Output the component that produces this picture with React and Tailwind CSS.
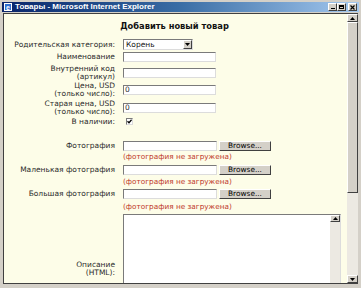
import React from "react";

const lbl = "w-[112px] shrink-0 pr-[1px] text-right leading-[7.5px] whitespace-nowrap";
const inputCls =
  "h-[10px] bg-white border border-t-[#7a7a7a] border-l-[#7a7a7a] border-b-[#dcdcdc] border-r-[#dcdcdc]";

function Btn3d({ children, className = "" }) {
  return (
    <div
      className={
        "bg-[#d4d0c8] border border-t-[#ffffff] border-l-[#ffffff] border-b-[#404040] border-r-[#404040] flex items-center justify-center " +
        className
      }
    >
      {children}
    </div>
  );
}

function Row({ label, children, className = "" }) {
  return (
    <div className={"flex items-center " + className}>
      <div className={lbl}>{label}</div>
      <div className="ml-[7px] flex items-center">{children}</div>
    </div>
  );
}

function Red({ className = "" }) {
  return (
    <div className={"flex " + className}>
      <div className="w-[112px] shrink-0" />
      <div className="ml-[7px] text-[#c0392b] leading-[8px] text-[7.3px]">(фотография не загружена)</div>
    </div>
  );
}

function FileRow({ label, className }) {
  return (
    <Row label={label} className={className}>
      <div className={inputCls + " w-[94px]"} />
      <Btn3d className="ml-[2px] w-[52px] h-[10px] text-[7.4px] text-black">Browse...</Btn3d>
    </Row>
  );
}

export default function App() {
  return (
    <div
      className="w-[361px] h-[288px] bg-[#d4d0c8] overflow-hidden flex flex-col text-[7.5px] text-[#2a2a2a]"
      style={{ fontFamily: '"DejaVu Sans", Verdana, sans-serif' }}
    >
      {/* title bar */}
      <div className="mx-[2px] mt-[2px] h-[10px] flex items-center bg-gradient-to-r from-[#0a246a] via-[#3a6ea5] to-[#a6caf0]">
        <svg width="8" height="8" viewBox="0 0 8 8" className="ml-[2px]">
          <rect x="0" y="0" width="8" height="8" fill="#ffffff" />
          <rect x="1" y="1" width="6" height="6" fill="#2f6fd0" />
          <text x="4" y="6.5" fontSize="7" fill="#fff" textAnchor="middle" fontFamily="Liberation Sans" fontWeight="bold">e</text>
        </svg>
        <span
          className="ml-[3px] text-white font-bold text-[8px] leading-[10px] whitespace-nowrap"
          style={{ fontFamily: '"Liberation Sans", Arial, sans-serif' }}
        >
          Товары - Microsoft Internet Explorer
        </span>
        <div className="ml-auto mr-[2px] flex items-center">
          <Btn3d className="w-[9px] h-[8px]">
            <div className="w-[4px] h-[1px] bg-black mt-[3px]" />
          </Btn3d>
          <Btn3d className="w-[9px] h-[8px]">
            <div className="w-[5px] h-[4px] border border-black border-t-2" />
          </Btn3d>
          <Btn3d className="ml-[2px] w-[9px] h-[8px]">
            <svg width="5" height="5" viewBox="0 0 5 5">
              <path d="M0.5 0.5 L4.5 4.5 M4.5 0.5 L0.5 4.5" stroke="#000" strokeWidth="1.2" />
            </svg>
          </Btn3d>
        </div>
      </div>

      {/* body */}
      <div className="mt-[1px] ml-[3px] mr-[3px] h-[271px] flex border-l border-t border-l-[#404040] border-t-[#404040] border-b border-b-[#404040] overflow-hidden">
        <div className="flex-1 bg-[#fdfde8] overflow-hidden flex flex-col">
          <div className="mt-[6px] h-[12px] flex items-center justify-center font-bold text-[8.3px] text-[#111] pr-[2px]">
            Добавить новый товар
          </div>

          <Row label="Родительская категория:" className="mt-[7px] h-[11px]">
            <div className={inputCls + " w-[70px] h-[11px] flex items-center justify-between"}>
              <span className="ml-[2px] leading-[8px] text-[#111]">Корень</span>
              <Btn3d className="w-[9px] h-[9px]">
                <svg width="5" height="3" viewBox="0 0 5 3">
                  <path d="M0 0 L5 0 L2.5 3 Z" fill="#000" />
                </svg>
              </Btn3d>
            </div>
          </Row>

          <Row label="Наименование" className="mt-[2px] h-[10px]">
            <div className={inputCls + " w-[93px]"} />
          </Row>

          <Row label={<>Внутренний код<br />(артикул)</>} className="mt-[3px] h-[15px]">
            <div className={inputCls + " w-[93px]"} />
          </Row>

          <Row label={<>Цена, USD<br />(только число):</>} className="mt-[2px] h-[15px]">
            <div className={inputCls + " w-[93px] flex items-center"}>
              <span className="ml-[1px] leading-[7px]">0</span>
            </div>
          </Row>

          <Row label={<>Старая цена, USD<br />(только число):</>} className="mt-[3px] h-[15px]">
            <div className={inputCls + " w-[93px] flex items-center"}>
              <span className="ml-[1px] leading-[7px]">0</span>
            </div>
          </Row>

          <Row label="В наличии:" className="mt-[3px] h-[8px]">
            <div className="ml-[3px] w-[7px] h-[7px] bg-white border border-t-[#7a7a7a] border-l-[#7a7a7a] border-b-[#dcdcdc] border-r-[#dcdcdc] flex items-center justify-center">
              <svg width="5" height="5" viewBox="0 0 5 5">
                <path d="M0.5 2.3 L2 3.8 L4.6 0.8" stroke="#000" strokeWidth="1.3" fill="none" />
              </svg>
            </div>
          </Row>

          <FileRow label="Фотография" className="mt-[15px] h-[10px]" />
          <Red className="mt-[2px]" />
          <FileRow label="Маленькая фотография" className="mt-[4px] h-[10px]" />
          <Red className="mt-[3px]" />
          <FileRow label="Большая фотография" className="mt-[3px] h-[10px]" />
          <Red className="mt-[4px]" />

          <Row label={<>Описание<br />(HTML):</>} className="mt-[3px] h-[110px] shrink-0">
            <div className="w-[218px] h-[110px] bg-white border border-t-[#7a7a7a] border-l-[#7a7a7a] border-b-[#dcdcdc] border-r-[#dcdcdc] flex justify-end">
              <div className="w-[10px] h-full bg-[#ece9e2] flex flex-col">
                <Btn3d className="w-[10px] h-[7px]">
                  <svg width="5" height="3" viewBox="0 0 5 3">
                    <path d="M0 3 L5 3 L2.5 0 Z" fill="#000" />
                  </svg>
                </Btn3d>
              </div>
            </div>
          </Row>
        </div>

        {/* window scrollbar */}
        <div className="w-[11px] shrink-0 bg-[#ece9e2] flex flex-col">
          <Btn3d className="w-[11px] h-[8px]">
            <svg width="5" height="3" viewBox="0 0 5 3">
              <path d="M0 3 L5 3 L2.5 0 Z" fill="#000" />
            </svg>
          </Btn3d>
          <div className="w-[11px] h-[171px] bg-[#d4d0c8] border border-t-[#ffffff] border-l-[#ffffff] border-b-[#404040] border-r-[#404040]" />
          <div className="flex-1" />
          <Btn3d className="w-[11px] h-[8px]">
            <svg width="5" height="3" viewBox="0 0 5 3">
              <path d="M0 0 L5 0 L2.5 3 Z" fill="#000" />
            </svg>
          </Btn3d>
        </div>
      </div>
    </div>
  );
}
